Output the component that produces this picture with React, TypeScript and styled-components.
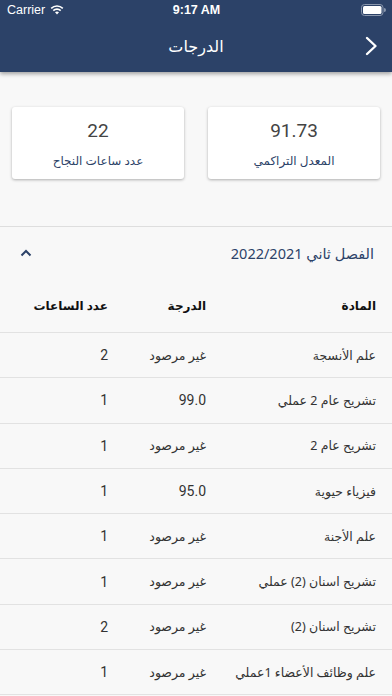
import React from "react";
import styled, { createGlobalStyle } from "styled-components";

const Global = createGlobalStyle`
  html, body { margin: 0; padding: 0; background: #f8f8f8; }
  body { font-family: "Noto Sans", "DejaVu Sans", sans-serif; }
  * { box-sizing: border-box; }
`;

const Page = styled.div`
  width: 392px;
  height: 696px;
  overflow: hidden;
  background: #f8f8f8;
  direction: rtl;
`;

const Header = styled.header`
  background: #2c4268;
  height: 72px;
  box-shadow: 0 2px 4px rgba(0, 0, 0, 0.35);
  position: relative;
  z-index: 2;
  display: flex;
  flex-direction: column;
`;

const StatusBar = styled.div`
  direction: ltr;
  height: 20px;
  display: grid;
  grid-template-columns: 1fr auto 1fr;
  align-items: center;
  padding: 0 6px 0 7px;
  color: #fff;
  font-family: "Liberation Sans", Arial, sans-serif;
  font-size: 12.5px;
`;

const Carrier = styled.div`
  display: flex;
  align-items: center;
  gap: 5px;
`;

const Time = styled.div`
  font-weight: 700;
  font-size: 12.5px;
`;

const BatteryWrap = styled.div`
  justify-self: end;
  display: flex;
  align-items: center;
`;

const NavBar = styled.div`
  flex: 1;
  display: flex;
  align-items: center;
  justify-content: center;
  position: relative;
`;

const Title = styled.h1`
  margin: 0;
  color: #fff;
  font-weight: 400;
  font-size: 16px;
`;

const BackButton = styled.div`
  position: absolute;
  right: 14px;
  top: 50%;
  transform: translateY(-50%);
  display: flex;
`;

const Cards = styled.div`
  display: flex;
  gap: 24px;
  padding: 35px 12px 47px;
`;

const Card = styled.div`
  flex: 1;
  height: 72px;
  background: #fff;
  border-radius: 3px;
  box-shadow: 0 1px 3px rgba(0, 0, 0, 0.3);
  display: flex;
  flex-direction: column;
  align-items: center;
  justify-content: center;
  gap: 8px;
  padding-top: 4px;
`;

const CardValue = styled.div`
  font-family: Roboto, "Noto Sans", sans-serif;
  font-size: 19px;
  color: #444;
  line-height: 24px;
`;

const CardLabel = styled.div`
  font-size: 12px;
  color: #2c4268;
  line-height: 20px;
`;

const Section = styled.section`
  border-top: 1px solid #dedede;
`;

const SectionHead = styled.div`
  height: 52px;
  display: flex;
  align-items: center;
  justify-content: space-between;
  padding: 0 18px 0 20px;
`;

const SectionTitle = styled.div`
  font-size: 14.5px;
  color: #2c4268;
`;

const Row = styled.div<{ $head?: boolean }>`
  display: grid;
  grid-template-columns: 170px 98px 1fr;
  align-items: center;
  height: ${(p) => (p.$head ? "54px" : "45.3px")};
  padding-right: 16px;
  border-bottom: 1.5px solid #e2e2e2;
  font-size: ${(p) => (p.$head ? "12px" : "12.5px")};
  font-weight: ${(p) => (p.$head ? 700 : 400)};
  color: ${(p) => (p.$head ? "#111" : "#333")};
`;

const Cell = styled.div<{ $num?: boolean }>`
  text-align: right;
  white-space: nowrap;
  font-family: ${(p) => (p.$num ? 'Roboto, "Noto Sans", sans-serif' : "inherit")};
  font-size: ${(p) => (p.$num ? "14px" : "inherit")};
`;

const rows: [string, string, string][] = [
  ["علم الأنسجة", "غير مرصود", "2"],
  ["تشريح عام 2 عملي", "99.0", "1"],
  ["تشريح عام 2", "غير مرصود", "1"],
  ["فيزياء حيوية", "95.0", "1"],
  ["علم الأجنة", "غير مرصود", "1"],
  ["تشريح اسنان (2) عملي", "غير مرصود", "1"],
  ["تشريح اسنان (2)", "غير مرصود", "2"],
  ["علم وظائف الأعضاء 1عملي", "غير مرصود", "1"],
];

export default function App() {
  return (
    <Page>
      <Global />
      <Header>
        <StatusBar>
          <Carrier>
            Carrier
            <svg width="14" height="10" viewBox="0 0 14 10">
              <path d="M7 9.5 L5 7.3 A3 3 0 0 1 9 7.3 Z" fill="#fff" />
              <path d="M3.3 5.6 A5.3 5.3 0 0 1 10.7 5.6" stroke="#fff" strokeWidth="1.6" fill="none" />
              <path d="M1.2 3.4 A8.3 8.3 0 0 1 12.8 3.4" stroke="#fff" strokeWidth="1.6" fill="none" />
            </svg>
          </Carrier>
          <Time>9:17 AM</Time>
          <BatteryWrap>
            <svg width="25" height="12" viewBox="0 0 25 12">
              <rect x="0.5" y="0.5" width="21.5" height="11" rx="3" stroke="#8a97ad" fill="none" />
              <rect x="2" y="2" width="18.5" height="8" rx="1.5" fill="#fff" />
              <path d="M23 4 A2 2 0 0 1 23 8 Z" fill="#8a97ad" />
            </svg>
          </BatteryWrap>
        </StatusBar>
        <NavBar>
          <Title>الدرجات</Title>
          <BackButton>
            <svg width="13" height="20" viewBox="0 0 13 20">
              <path d="M2 2 L10.5 10 L2 18" stroke="#fff" strokeWidth="2.4" fill="none" strokeLinecap="round" strokeLinejoin="round" />
            </svg>
          </BackButton>
        </NavBar>
      </Header>
      <Cards>
        <Card>
          <CardValue>91.73</CardValue>
          <CardLabel>المعدل التراكمي</CardLabel>
        </Card>
        <Card>
          <CardValue>22</CardValue>
          <CardLabel>عدد ساعات النجاح</CardLabel>
        </Card>
      </Cards>
      <Section>
        <SectionHead>
          <SectionTitle>الفصل ثاني 2022/2021</SectionTitle>
          <svg width="12" height="8" viewBox="0 0 12 8">
            <path d="M1.5 6.5 L6 2 L10.5 6.5" stroke="#2c4268" strokeWidth="2" fill="none" />
          </svg>
        </SectionHead>
        <Row $head>
          <Cell>المادة</Cell>
          <Cell>الدرجة</Cell>
          <Cell>عدد الساعات</Cell>
        </Row>
        {rows.map(([s, g, h]) => (
          <Row key={s}>
            <Cell>{s}</Cell>
            <Cell $num={!isNaN(Number(g))}>{g}</Cell>
            <Cell $num>{h}</Cell>
          </Row>
        ))}
      </Section>
    </Page>
  );
}
